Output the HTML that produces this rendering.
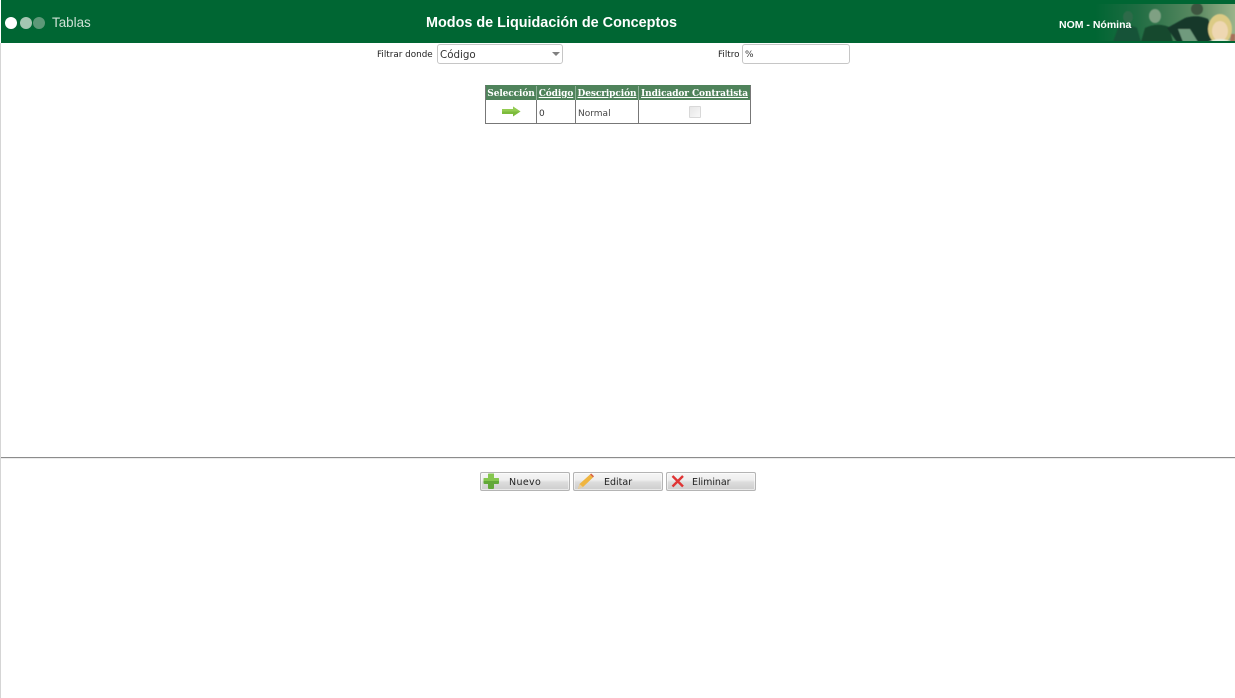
<!DOCTYPE html>
<html lang="es">
<head>
<meta charset="utf-8">
<title>Modos de Liquidación de Conceptos</title>
<style>
html,body{margin:0;padding:0;background:#fff;width:1235px;height:698px;overflow:hidden}
body{position:relative;font-family:"DejaVu Sans","Liberation Sans",sans-serif;color:#222}
.a{position:absolute;white-space:nowrap}
#hdr{left:1px;top:0;width:1234px;height:43px;background:#006633;overflow:hidden}
.dot{position:absolute;top:17px;width:12px;height:12px;border-radius:50%}
.sans{font-family:"Liberation Sans",Arial,sans-serif}
.lbl{font-size:8.8px;line-height:12px;color:#222}
.box{background:#fff;border:1px solid #c6c6c6;border-radius:3px;box-sizing:border-box}
.th{position:absolute;top:85px;height:15px;background:#4f835b;color:#fff;font:bold 9px/18px "DejaVu Serif","Liberation Serif",serif;text-align:center;letter-spacing:-.1px;white-space:nowrap;overflow:hidden}
.th u{text-decoration:underline}
.v{position:absolute;top:100px;width:1px;height:24px;background:#777}
.btn{position:absolute;top:472px;width:90px;height:19px;box-sizing:border-box;border:1px solid #b4b4b4;border-radius:2px;background:linear-gradient(#f6f6f6 0,#efefef 40%,#dcdcdc 55%,#cdcdcd 100%);box-shadow:inset 0 0 0 1px rgba(255,255,255,.55);font-size:9.5px;line-height:20px;color:#222}
.btn span{position:absolute;top:0}
.btn svg{position:absolute;left:0;top:0}
</style>
</head>
<body>
<div class="a" style="left:0;top:43px;width:1px;height:655px;background:#d5d5d5"></div>

<div id="hdr" class="a">
  <div class="dot" style="left:4px;background:#fff"></div>
  <div class="dot" style="left:19px;background:#a5c6b2"></div>
  <div class="dot" style="left:32px;background:#5d9878"></div>
  <div class="a sans" style="left:51px;top:14px;font-size:13.4px;line-height:17px;color:#cfe2d6">Tablas</div>
  <div class="a sans" style="left:425px;top:15px;font-size:14.4px;line-height:17px;font-weight:bold;color:#fff">Modos de Liquidación de Conceptos</div>

  <svg class="a" style="left:1094px;top:4px" width="140" height="37" viewBox="-10 0 140 37">
    <defs>
      <linearGradient id="fade" x1="0" x2="1" y1="0" y2="0">
        <stop offset="0" stop-color="#006633"/>
        <stop offset=".3" stop-color="#1f6c42"/>
        <stop offset=".75" stop-color="#5f8c64"/>
        <stop offset="1" stop-color="#9ab48b"/>
      </linearGradient>
      <filter id="soft"><feGaussianBlur stdDeviation=".6"/></filter>
    </defs>
    <rect x="-10" width="140" height="37" fill="url(#fade)"/>
    <g filter="url(#soft)">
      <ellipse cx="23" cy="13" rx="5" ry="6" fill="#2f6a4a"/>
      <path d="M8 38 L13 24 Q22 19 32 24 L36 38Z" fill="#195237"/>
      <ellipse cx="50" cy="12" rx="6" ry="7" fill="#7fa083"/>
      <path d="M36 38 L40 24 Q52 18 64 23 L68 38Z" fill="#14492f"/>
      <ellipse cx="92" cy="5" rx="6" ry="6" fill="#3c5540"/>
      <path d="M62 24 L80 14 Q92 10 103 15 L112 38 L72 38Z" fill="#12382a"/>
      <path d="M73 25 L85 25 L93 38 L78 38Z" fill="#6f9a7d"/>
      <ellipse cx="115" cy="25" rx="12" ry="15" fill="#dccb85"/>
      <ellipse cx="115" cy="27" rx="8" ry="10" fill="#eed7b2"/>
      <path d="M103 38 Q115 32 127 38Z" fill="#e6eee0"/>
      <path d="M126 30 H130 V38 H125Z" fill="#a8705a"/>
    </g>
  </svg>
  <div class="a sans" style="left:1058px;top:19px;font-size:10.5px;line-height:13px;font-weight:bold;color:#fff">NOM - Nómina</div>
</div>

<div class="a lbl" style="left:377px;top:49px">Filtrar donde</div>
<div class="a box" style="left:437px;top:44px;width:126px;height:20px"></div>
<div class="a" style="left:440px;top:48px;font-size:10.3px;line-height:14px;color:#333">Código</div>
<div class="a" style="left:552px;top:52px;width:0;height:0;border-left:4px solid transparent;border-right:4px solid transparent;border-top:4px solid #808080"></div>

<div class="a lbl" style="left:718px;top:49px">Filtro</div>
<div class="a box" style="left:742px;top:44px;width:108px;height:20px"></div>
<div class="a" style="left:745px;top:49px;font-size:9px;line-height:12px;color:#333">%</div>

<div class="th" style="left:486px;width:50px">Selección</div>
<div class="th" style="left:537px;width:38px"><u>Código</u></div>
<div class="th" style="left:576px;width:62px"><u>Descripción</u></div>
<div class="th" style="left:639px;width:111px"><u>Indicador Contratista</u></div>
<div class="a" style="left:536px;top:85px;width:1px;height:15px;background:#8fb097"></div>
<div class="a" style="left:575px;top:85px;width:1px;height:15px;background:#8fb097"></div>
<div class="a" style="left:638px;top:85px;width:1px;height:15px;background:#8fb097"></div>

<div class="a" style="left:485px;top:85px;width:266px;height:39px;box-sizing:border-box;border:1px solid #777;border-top-color:#4f835b"></div>
<div class="v" style="left:536px"></div>
<div class="v" style="left:575px"></div>
<div class="v" style="left:638px"></div>

<svg class="a" style="left:501px;top:106px" width="20" height="11" viewBox="0 0 20 11">
  <path d="M1 3H12V0.5L19.5 5.5L12 10.5V8H1Z" fill="#7dbb3c"/>
  <path d="M1 3H12V0.5L19.5 5.5H1Z" fill="#93cc52"/>
</svg>
<div class="a" style="left:539px;top:108px;font-size:9px;line-height:12px;color:#333">0</div>
<div class="a" style="left:578px;top:108px;font-size:9px;line-height:12px;color:#444">Normal</div>
<div class="a" style="left:689px;top:106px;width:12px;height:12px;box-sizing:border-box;border:1px solid #d8d8d8;border-radius:1px;background:linear-gradient(135deg,#e6e6e6,#f8f8f8)"></div>

<div class="a" style="left:1px;top:457px;width:1234px;height:1px;background:#8c8c8c"></div>
<div class="a" style="left:1px;top:458px;width:1234px;height:1px;background:#ececec"></div>

<div class="btn" style="left:480px">
  <svg width="20" height="18" viewBox="0 0 20 18"><path d="M8 .5H12.500Q13 .5 13 1V5H17Q18 5 18 6V10Q18 11 17 11H13V15Q13 16 12 16H8Q7 16 7 15V11H3.500Q2.500 11 2.500 10V6Q2.500 5 3.500 5H7V1.500Q7 .5 8 .5Z" fill="#62a838"/><path d="M8 .5H12.500Q13 .5 13 1V5H17Q18 5 18 6V8H2.500V6Q2.500 5 3.500 5H7V1.500Q7 .5 8 .5Z" fill="#85c64f"/></svg>
  <span style="left:28px;letter-spacing:.35px">Nuevo</span>
</div>
<div class="btn" style="left:573px">
  <svg width="22" height="18" viewBox="0 0 22 18"><path d="M4 16L5.500 11L16 1.500L19 4.500L9 14Z" fill="#efb540"/><path d="M4 16L5.500 11L9 14Z" fill="#e8cfa0"/><path d="M16 1.500L17.200 .5L20 3.300L19 4.500Z" fill="#d9603f"/></svg>
  <span style="left:30px">Editar</span>
</div>
<div class="btn" style="left:666px">
  <svg width="20" height="18" viewBox="0 0 20 18"><path d="M5.500 3L16 13.500M16 3L5.500 13.500" stroke="#e03434" stroke-width="2.400" fill="none"/></svg>
  <span style="left:25px;letter-spacing:-.05px">Eliminar</span>
</div>
</body>
</html>
